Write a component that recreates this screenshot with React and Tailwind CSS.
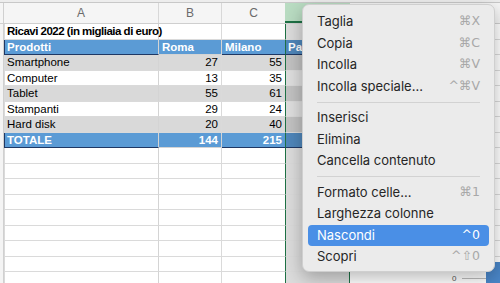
import React from 'react';

const rows = [
  { name: 'Smartphone', b: 27, c: 55, band: true },
  { name: 'Computer', b: 13, c: 35, band: false },
  { name: 'Tablet', b: 55, c: 61, band: true },
  { name: 'Stampanti', b: 29, c: 24, band: false },
  { name: 'Hard disk', b: 20, c: 40, band: true },
];

const menu = [
  { label: 'Taglia', key: '⌘X' },
  { label: 'Copia', key: '⌘C' },
  { label: 'Incolla', key: '⌘V' },
  { label: 'Incolla speciale...', key: '^⌘V' },
  'sep',
  { label: 'Inserisci' },
  { label: 'Elimina' },
  { label: 'Cancella contenuto' },
  'sep',
  { label: 'Formato celle...', key: '⌘1' },
  { label: 'Larghezza colonne' },
  { label: 'Nascondi', key: '^0', active: true },
  { label: 'Scopri', key: '^⇧0' },
];

function Row({ a, b, c, d, cls = '', aCls = '', dCls = 'bg-[#dcdcdc]', bottom = 'border-b border-[#dadada]' }) {
  return (
    <div className={`flex h-[15.5px] shrink-0 whitespace-nowrap ${cls}`}>
      <div className="w-[4px] shrink-0 bg-[#f4f4f4] border-r border-[#d0d0d0]" />
      <div className={`w-[155px] shrink-0 border-l-[1.5px] border-[#1e7145] border-r border-r-[#d4d4d4] pl-[2px] leading-[15px] overflow-visible ${bottom} ${aCls}`}>{a}</div>
      <div className={`w-[63px] shrink-0 border-r border-[#d4d4d4] px-[3px] leading-[15px] ${bottom}`}>{b}</div>
      <div className={`w-[63px] shrink-0 px-[3px] leading-[15px] ${bottom}`}>{c}</div>
      <div className={`w-[65px] shrink-0 border-x-[1.5px] border-x-[#1e7145] overflow-hidden ${dCls} ${bottom}`}>{d}</div>
      <div className="flex-1 bg-white border-b border-[#dadada]" />
    </div>
  );
}

export default function App() {
  return (
    <div className="relative w-[500px] h-[283px] overflow-hidden bg-white text-[11.5px] text-black font-['Liberation_Sans',Arial,sans-serif]">
      {/* top strip */}
      <div className="h-[3px] bg-[#ededed] border-b border-[#c8c8c8]" />
      {/* column headers */}
      <div className="flex h-[21px] bg-[#f5f5f5] border-b border-[#cfcfcf] text-[12px] text-[#6b6b6b]">
        <div className="w-[4px] border-r border-[#d0d0d0]" />
        <div className="w-[155px] flex items-center justify-center border-r border-[#d8d8d8]">A</div>
        <div className="w-[63px] flex items-center justify-center border-r border-[#d8d8d8]">B</div>
        <div className="w-[63px] flex items-center justify-center">C</div>
        <div className="w-[65px] bg-[#b9dcc2] border-b-2 border-[#1e7145]" />
        <div className="flex-1" />
      </div>

      <Row a="Ricavi 2022 (in migliaia di euro)" aCls="font-bold tracking-[-0.5px]" dCls="bg-[#dcdcdc]" />
      <Row
        cls="bg-[#5b9bd5] text-white font-bold"
        a="Prodotti"
        b="Roma"
        c="Milano"
        d={<span className="pl-[2px] leading-[15px] block">Parigi</span>}
        dCls="bg-[#4f86ba]"
        bottom="border-b border-[#1f3864]"
      />
      {rows.map((r) => (
        <Row
          key={r.name}
          cls={r.band ? 'bg-[#d9d9d9]' : 'bg-white'}
          a={r.name}
          b={<span className="block text-right">{r.b}</span>}
          c={<span className="block text-right">{r.c}</span>}
          dCls={r.band ? 'bg-[#c2c2c2]' : 'bg-[#dedede]'}
        />
      ))}
      <Row
        cls="bg-[#5b9bd5] text-white font-bold"
        a="TOTALE"
        b={<span className="block text-right">144</span>}
        c={<span className="block text-right">215</span>}
        dCls="bg-[#4f86ba]"
        bottom="border-b border-[#1f3864]"
      />
      {Array.from({ length: 9 }).map((_, i) => (
        <Row key={i} />
      ))}

      {/* chart fragment behind the menu */}
      <div className="absolute left-[452px] top-[273px] text-[8px] text-[#555] font-['Liberation_Sans',sans-serif]">0</div>
      <div className="absolute left-[462px] top-[278px] w-[24px] h-px bg-[#bdbdbd]" />
      <div className="absolute left-[486px] top-[262px] w-[14px] h-[21px] bg-[#4a86c8]" />

      {/* context menu */}
      <div className="absolute left-[302px] top-[4px] w-[193px] h-[268px] rounded-[7px] bg-[#ebebeb] border border-[#cfcfcf] shadow-[0_6px_18px_rgba(0,0,0,0.28)] px-[5px] py-[6px] text-[13px] text-[#262626] font-['Inter','Liberation_Sans',sans-serif]">
        {menu.map((m, i) =>
          m === 'sep' ? (
            <div key={i} className="h-[10px] flex items-center px-[9px]">
              <div className="h-px w-full bg-[#d2d2d2]" />
            </div>
          ) : (
            <div
              key={i}
              className={`h-[21.5px] flex items-center justify-between px-[9px] rounded-[4px] ${m.active ? 'bg-[#4a8fe6] text-white' : ''}`}
            >
              <span>{m.label}</span>
              {m.key && (
                <span className={`font-['DejaVu_Sans',sans-serif] text-[12.5px] ${m.active ? 'text-white' : 'text-[#a8a8a8]'}`}>
                  {m.key}
                </span>
              )}
            </div>
          )
        )}
      </div>
    </div>
  );
}
